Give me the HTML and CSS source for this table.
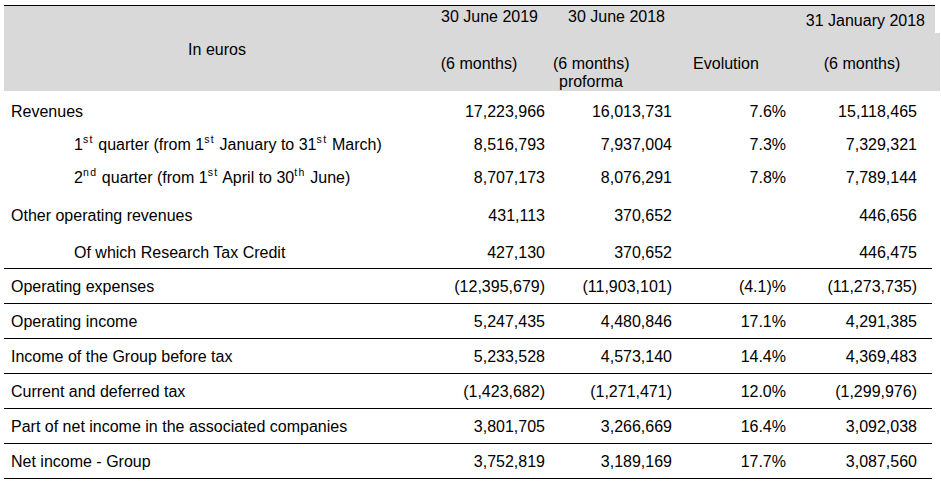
FILE: index.html
```html
<!DOCTYPE html>
<html lang="en">
<head>
<meta charset="utf-8">
<title>Half-year results</title>
<link rel="stylesheet" href="styles.css">
</head>
<body>
<div class="wrap">
  <div class="head">
    <div class="h-label">In euros</div>
    <div class="h1 h1-c1">30 June 2019</div>
    <div class="h1 h1-c2">30 June 2018</div>
    <div class="h1 h1-c3"></div>
    <div class="h1 h1-c4">31 January 2018</div>
    <div class="h2 h2-c1">(6 months)</div>
    <div class="h2 h2-c2">(6 months)<br>proforma</div>
    <div class="h2 h2-c3">Evolution</div>
    <div class="h2 h2-c4">(6 months)</div>
  </div>

  <div class="row r-rev">
    <div class="lbl">Revenues</div>
    <div class="n c1">17,223,966</div>
    <div class="n c2">16,013,731</div>
    <div class="n c3">7.6%</div>
    <div class="n c4">15,118,465</div>
  </div>
  <div class="row r-q1">
    <div class="lbl ind">1<sup>st</sup> quarter (from 1<sup>st</sup> January to 31<sup>st</sup> March)</div>
    <div class="n c1">8,516,793</div>
    <div class="n c2">7,937,004</div>
    <div class="n c3">7.3%</div>
    <div class="n c4">7,329,321</div>
  </div>
  <div class="row r-q2">
    <div class="lbl ind">2<sup>nd</sup> quarter (from 1<sup>st</sup> April to 30<sup>th</sup> June)</div>
    <div class="n c1">8,707,173</div>
    <div class="n c2">8,076,291</div>
    <div class="n c3">7.8%</div>
    <div class="n c4">7,789,144</div>
  </div>
  <div class="row r-oth">
    <div class="lbl">Other operating revenues</div>
    <div class="n c1">431,113</div>
    <div class="n c2">370,652</div>
    <div class="n c3"></div>
    <div class="n c4">446,656</div>
  </div>
  <div class="row r-ruled r-cir">
    <div class="lbl ind">Of which Research Tax Credit</div>
    <div class="n c1">427,130</div>
    <div class="n c2">370,652</div>
    <div class="n c3"></div>
    <div class="n c4">446,475</div>
  </div>
  <div class="row r-ruled">
    <div class="lbl">Operating expenses</div>
    <div class="n c1">(12,395,679)</div>
    <div class="n c2">(11,903,101)</div>
    <div class="n c3">(4.1)%</div>
    <div class="n c4">(11,273,735)</div>
  </div>
  <div class="row r-ruled">
    <div class="lbl">Operating income</div>
    <div class="n c1">5,247,435</div>
    <div class="n c2">4,480,846</div>
    <div class="n c3">17.1%</div>
    <div class="n c4">4,291,385</div>
  </div>
  <div class="row r-ruled">
    <div class="lbl">Income of the Group before tax</div>
    <div class="n c1">5,233,528</div>
    <div class="n c2">4,573,140</div>
    <div class="n c3">14.4%</div>
    <div class="n c4">4,369,483</div>
  </div>
  <div class="row r-ruled">
    <div class="lbl">Current and deferred tax</div>
    <div class="n c1">(1,423,682)</div>
    <div class="n c2">(1,271,471)</div>
    <div class="n c3">12.0%</div>
    <div class="n c4">(1,299,976)</div>
  </div>
  <div class="row r-ruled">
    <div class="lbl">Part of net income in the associated companies</div>
    <div class="n c1">3,801,705</div>
    <div class="n c2">3,266,669</div>
    <div class="n c3">16.4%</div>
    <div class="n c4">3,092,038</div>
  </div>
  <div class="row r-ruled">
    <div class="lbl">Net income - Group</div>
    <div class="n c1">3,752,819</div>
    <div class="n c2">3,189,169</div>
    <div class="n c3">17.7%</div>
    <div class="n c4">3,087,560</div>
  </div>
</div>
</body>
</html>
```

FILE: styles.css
```css
* { box-sizing: border-box; }

html, body {
  margin: 0;
  padding: 0;
  background: #ffffff;
}

body {
  font-family: "Liberation Sans", Arial, sans-serif;
  font-size: 16px;
  line-height: 18px;
  color: #000000;
}

.wrap {
  padding: 5px 0 0 4px;
}

/* ---------- header ---------- */
.head {
  display: grid;
  grid-template-columns: 416px 133px 127px 115px 145px;
  grid-template-rows: 28px 58px;
  width: 936px;
}

.h-label {
  grid-row: 1 / 3;
  grid-column: 1;
  background: #d9d9d9;
  border-top: 1px solid #000;
  display: flex;
  align-items: center;
  justify-content: center;
  padding-left: 10px;
  padding-top: 2px;
}

.h1 {
  background: #d9d9d9;
  border-top: 1px solid #000;
  padding-top: 2px;
  text-align: right;
  white-space: nowrap;
}

.h1-c1 { padding-right: 15px; }
.h1-c2 { padding-right: 15px; }
.h1-c4 {
  margin-right: 5px;
  padding-top: 6px;
  padding-right: 10px;
}

.h2 {
  background: #d9d9d9;
  padding-top: 22px;
  text-align: center;
  white-space: nowrap;
}

.h2-c1 { padding-right: 15px; }
.h2-c2 { padding-right: 51px; }
.h2-c3 { padding-right: 23px; }
.h2-c4 { padding-right: 11px; }

/* ---------- body rows ---------- */
.row {
  display: grid;
  grid-template-columns: 416px 133px 127px 115px 137px;
  width: 928px;
  align-items: center;
}

.row > div {
  padding-top: 2px;
}

.r-rev { height: 39px; }
.r-q1 { height: 28px; }
.r-q2 { height: 38px; }
.r-oth { height: 38px; }

.r-ruled {
  height: 35px;
  border-bottom: 1px solid #000;
}

.r-cir > div {
  padding-top: 4px;
}

.lbl {
  padding-left: 7px;
  white-space: nowrap;
}

.lbl.ind {
  padding-left: 70px;
}

.lbl sup {
  font-size: 10.5px;
  letter-spacing: 1.4px;
  line-height: 0;
  vertical-align: 7px;
}

.n {
  text-align: right;
  white-space: nowrap;
}

.c1 { padding-right: 8px; }
.c2 { padding-right: 8px; }
.c3 { padding-right: 9px; }
.c4 { padding-right: 15px; }
```
